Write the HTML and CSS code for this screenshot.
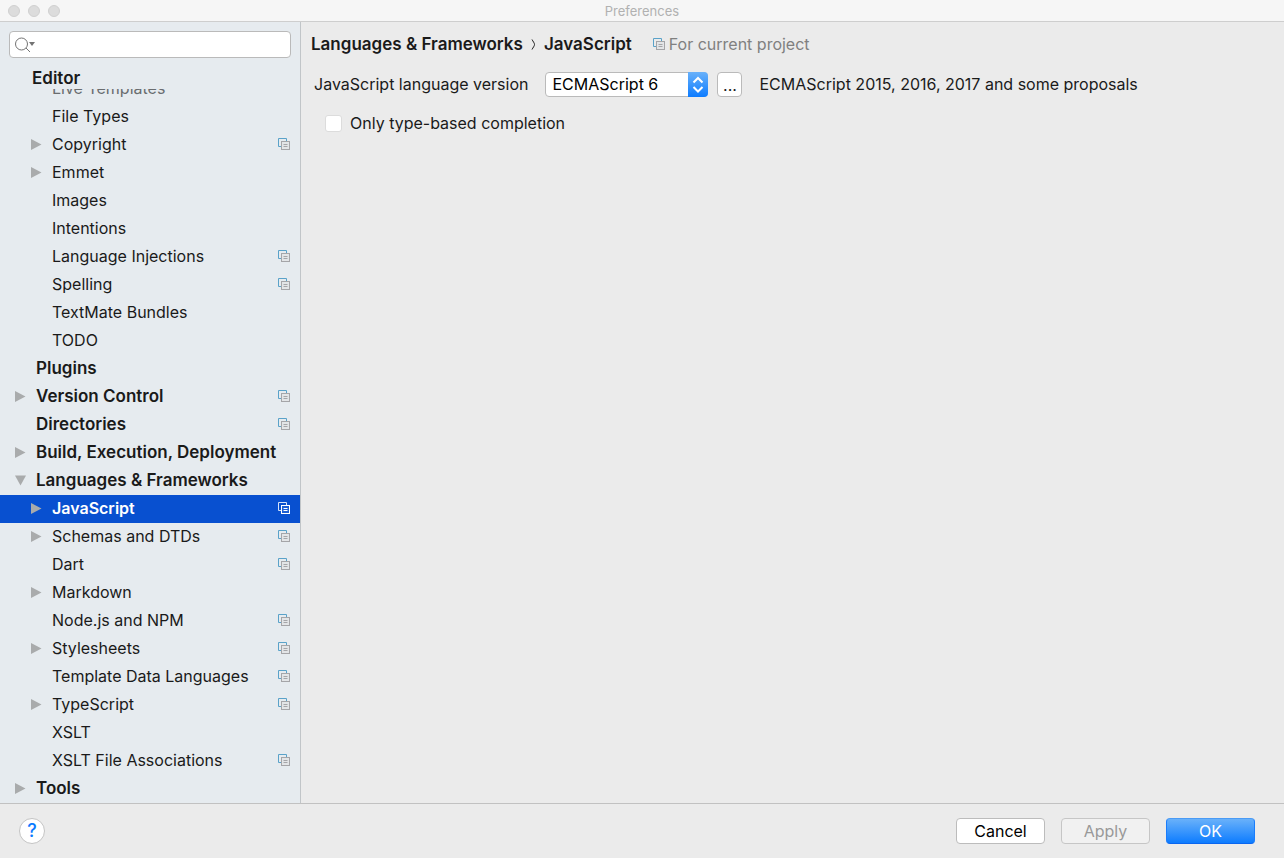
FILE: index.html
```html
<!DOCTYPE html>
<html lang="en">
<head>
<meta charset="utf-8">
<title>Preferences</title>
<link rel="stylesheet" href="styles.css">
</head>
<body>
<svg class="defs" aria-hidden="true">
  <symbol id="project" viewBox="0 0 12 12">
    <path class="sheet-back" d="M3 8.500H.5V.5h8V3"/>
    <rect class="sheet-front" x="3.500" y="3.500" width="8" height="8"/>
    <path class="sheet-lines" d="M5.500 6.500h4M5.500 8.500h4"/>
  </symbol>
  <symbol id="right" viewBox="0 0 11 11"><path d="M0 0v11l10.500-5.500z"/></symbol>
  <symbol id="down" viewBox="0 0 11 11"><path d="M0 .5h11L5.500 10.500z"/></symbol>
</svg>
<header class="titlebar">
  <div class="lights"><span class="light"></span><span class="light"></span><span class="light"></span></div>
  <h1 class="title">Preferences</h1>
</header>
<div class="body">
  <aside class="sidebar">
    <label class="search">
      <svg class="search-icon" viewBox="0 0 20 16" aria-hidden="true"><circle cx="6.500" cy="7" r="6"/><path d="M11 11l4 4"/><path class="search-caret" d="M14 5h6l-3 4z"/></svg>
      <input class="search-input" type="text" aria-label="Search preferences">
    </label>
    <div class="pinned">Editor</div>
    <nav class="tree" aria-label="Preferences sections">
      <a class="row sub faded" href="#"><span class="name">Live Templates</span></a>
      <a class="row sub" href="#"><span class="name">File Types</span></a>
      <a class="row sub" href="#"><svg class="arrow"><use href="#right"/></svg><span class="name">Copyright</span><svg class="project"><use href="#project"/></svg></a>
      <a class="row sub" href="#"><svg class="arrow"><use href="#right"/></svg><span class="name">Emmet</span></a>
      <a class="row sub" href="#"><span class="name">Images</span></a>
      <a class="row sub" href="#"><span class="name">Intentions</span></a>
      <a class="row sub" href="#"><span class="name">Language Injections</span><svg class="project"><use href="#project"/></svg></a>
      <a class="row sub" href="#"><span class="name">Spelling</span><svg class="project"><use href="#project"/></svg></a>
      <a class="row sub" href="#"><span class="name">TextMate Bundles</span></a>
      <a class="row sub" href="#"><span class="name">TODO</span></a>
      <a class="row" href="#"><span class="name">Plugins</span></a>
      <a class="row" href="#"><svg class="arrow"><use href="#right"/></svg><span class="name">Version Control</span><svg class="project"><use href="#project"/></svg></a>
      <a class="row" href="#"><span class="name">Directories</span><svg class="project"><use href="#project"/></svg></a>
      <a class="row" href="#"><svg class="arrow"><use href="#right"/></svg><span class="name">Build, Execution, Deployment</span></a>
      <a class="row" href="#"><svg class="arrow"><use href="#down"/></svg><span class="name">Languages &amp; Frameworks</span></a>
      <a class="row sub selected" href="#" aria-current="page"><svg class="arrow"><use href="#right"/></svg><span class="name">JavaScript</span><svg class="project"><use href="#project"/></svg></a>
      <a class="row sub" href="#"><svg class="arrow"><use href="#right"/></svg><span class="name">Schemas and DTDs</span><svg class="project"><use href="#project"/></svg></a>
      <a class="row sub" href="#"><span class="name">Dart</span><svg class="project"><use href="#project"/></svg></a>
      <a class="row sub" href="#"><svg class="arrow"><use href="#right"/></svg><span class="name">Markdown</span></a>
      <a class="row sub" href="#"><span class="name">Node.js and NPM</span><svg class="project"><use href="#project"/></svg></a>
      <a class="row sub" href="#"><svg class="arrow"><use href="#right"/></svg><span class="name">Stylesheets</span><svg class="project"><use href="#project"/></svg></a>
      <a class="row sub" href="#"><span class="name">Template Data Languages</span><svg class="project"><use href="#project"/></svg></a>
      <a class="row sub" href="#"><svg class="arrow"><use href="#right"/></svg><span class="name">TypeScript</span><svg class="project"><use href="#project"/></svg></a>
      <a class="row sub" href="#"><span class="name">XSLT</span></a>
      <a class="row sub" href="#"><span class="name">XSLT File Associations</span><svg class="project"><use href="#project"/></svg></a>
      <a class="row" href="#"><svg class="arrow"><use href="#right"/></svg><span class="name">Tools</span></a>
    </nav>
  </aside>
  <main class="content">
    <div class="crumbs">
      <h2 class="crumb">Languages &amp; Frameworks</h2>
      <svg class="chevron" viewBox="0 0 5 11" aria-hidden="true"><path d="M1 .5c1 2 2.500 3.500 2.500 5S2 8.500 1 10.500"/></svg>
      <h2 class="crumb">JavaScript</h2>
      <span class="scope"><svg class="project"><use href="#project"/></svg>For current project</span>
    </div>
    <div class="version">
      <label class="caption" for="version">JavaScript language version</label>
      <div class="picker">
        <select class="select" id="version"><option>ECMAScript 6</option></select>
        <svg class="stepper" viewBox="0 0 20 25" aria-hidden="true"><path d="M5.500 10.500l4.500-4.500 4.500 4.500M5.500 15l4.500 4.500 4.500-4.500"/></svg>
      </div>
      <button class="more" type="button" aria-label="More versions">...</button>
      <span class="caption">ECMAScript 2015, 2016, 2017 and some proposals</span>
    </div>
    <label class="check"><input class="box" type="checkbox">Only type-based completion</label>
  </main>
</div>
<footer class="footer">
  <button class="help" type="button" aria-label="Help">?</button>
  <div class="actions">
    <button class="button" type="button">Cancel</button>
    <button class="button" type="button" disabled>Apply</button>
    <button class="button primary" type="button">OK</button>
  </div>
</footer>
</body>
</html>
```
FILE: styles.css
```css
* { box-sizing: border-box; }

body {
  margin: 0;
  height: 100vh;
  display: flex;
  flex-direction: column;
  background: #ebebeb;
  color: #1a1a1a;
  font: 16px/20px Inter, "Liberation Sans", sans-serif;
}

button, input, select { font: inherit; color: inherit; }

.defs { display: none; }

.titlebar {
  display: grid;
  grid-template-columns: 1fr auto 1fr;
  align-items: center;
  height: 22px;
  padding: 0 8px;
  background: #f6f6f6;
  border-bottom: 1px solid #cecece;
}
.lights { display: flex; gap: 8px; }
.light {
  width: 12px;
  height: 12px;
  border: 1px solid #d0d0d0;
  border-radius: 50%;
  background: #dcdcdc;
}
.title {
  margin: 0;
  font-size: 13px;
  line-height: 20px;
  font-weight: 400;
  color: #b1b1b1;
}

.body { display: flex; flex: 1; min-height: 0; }

.sidebar {
  display: flex;
  flex-direction: column;
  flex: 0 0 301px;
  min-width: 0;
  background: #e6ebef;
  border-right: 1px solid #c1c5c8;
}
.search {
  display: flex;
  align-items: center;
  height: 27px;
  margin: 9px 9px 0;
  padding: 0 5px;
  background: #fff;
  border: 1px solid #bababa;
  border-radius: 4px;
}
.search-icon {
  width: 20px;
  height: 16px;
  fill: none;
  stroke: #737373;
}
.search-caret { fill: #737373; stroke: none; }
.search-input {
  flex: 1;
  min-width: 0;
  border: 0;
  outline: 0;
  background: none;
}
.pinned {
  height: 31px;
  padding: 10px 32px 0;
  font-size: 17px;
  font-weight: 600;
}
.tree {
  display: flex;
  flex-direction: column;
  justify-content: flex-end;
  flex: 1;
  min-height: 0;
  overflow: hidden;
}
.row {
  display: grid;
  grid-template-columns: 21px 1fr 12px;
  align-items: start;
  flex: 0 0 28px;
  padding: 3px 10px 0 15px;
  color: inherit;
  font-size: 17px;
  font-weight: 600;
  text-decoration: none;
  white-space: nowrap;
}
.row.sub { padding-left: 31px; font-size: 16px; font-weight: 400; }
.row.faded { color: #6a6d6f; }
.row.selected { background: #0850d0; color: #fff; font-weight: 600; }
.name { grid-column: 2; }
.arrow {
  grid-column: 1;
  grid-row: 1;
  width: 11px;
  height: 11px;
  margin-top: 5px;
  fill: #a9abac;
}
.project {
  --back: #5aa2c9;
  --front: #a5a5a8;
  --paper: #e3e5e7;
  width: 12px;
  height: 12px;
  fill: none;
}
.row .project { margin-top: 4px; }
.selected .project { --back: #d5e2f7; --front: #fff; --paper: #1d5fd4; }
.sheet-back { stroke: var(--back); }
.sheet-front, .sheet-lines { stroke: var(--front); }
.sheet-front { fill: var(--paper); }

.content { flex: 1; min-width: 0; padding: 12px 10px; }
.crumbs { display: flex; align-items: center; }
.crumb { margin: 0; font-size: 17px; line-height: 20px; font-weight: 600; }
.chevron {
  width: 5px;
  height: 11px;
  margin: 0 8px;
  fill: none;
  stroke: #1a1a1a;
}
.scope {
  display: flex;
  align-items: center;
  gap: 4px;
  margin-left: 21px;
  color: #808080;
}
.version { display: flex; align-items: center; margin-top: 18px; padding-left: 3px; }
.caption { padding-bottom: 2px; }
.picker { display: grid; width: 163px; height: 25px; margin-left: 17px; }
.select {
  grid-area: 1 / 1;
  width: 100%;
  padding: 0 24px 2px 6px;
  appearance: none;
  background: #fff;
  border: 1px solid #bababa;
  border-radius: 4px;
  color: #000;
}
.stepper {
  grid-area: 1 / 1;
  justify-self: end;
  width: 20px;
  height: 25px;
  background: linear-gradient(#69b1fa, #0d7cff);
  border-radius: 0 4px 4px 0;
  fill: none;
  stroke: #fff;
  stroke-width: 2;
  pointer-events: none;
}
.more {
  width: 25px;
  height: 25px;
  margin: 0 17px 0 9px;
  padding: 0;
  background: #fff;
  border: 1px solid #bababa;
  border-radius: 4px;
}
.check {
  display: flex;
  align-items: center;
  gap: 8px;
  width: fit-content;
  margin: 16px 0 0 14px;
}
.box {
  width: 17px;
  height: 17px;
  margin: 0;
  appearance: none;
  background: #fff;
  border: 1px solid #dcdcdc;
  border-radius: 3px;
}

.footer {
  display: flex;
  align-items: center;
  justify-content: space-between;
  height: 55px;
  padding: 0 29px 0 19px;
  border-top: 1px solid #c1c1c1;
}
.help {
  width: 26px;
  height: 26px;
  padding: 0;
  background: #fff;
  border: 1px solid #c4c4c4;
  border-radius: 50%;
  color: #0a7aff;
  font-size: 18px;
  font-weight: 500;
}
.actions { display: flex; gap: 16px; }
.button {
  width: 89px;
  height: 26px;
  padding: 0;
  background: #fff;
  border: 1px solid #bcbcbc;
  border-radius: 4px;
  color: #000;
}
.button:disabled { background: #f1f1f1; border-color: #c6c6c6; color: #999; }
.button.primary {
  background: linear-gradient(#69b1fa, #0d7cff);
  border-color: #4a9bf5 #1a7dfc #0a66f0;
  color: #fff;
}
```
